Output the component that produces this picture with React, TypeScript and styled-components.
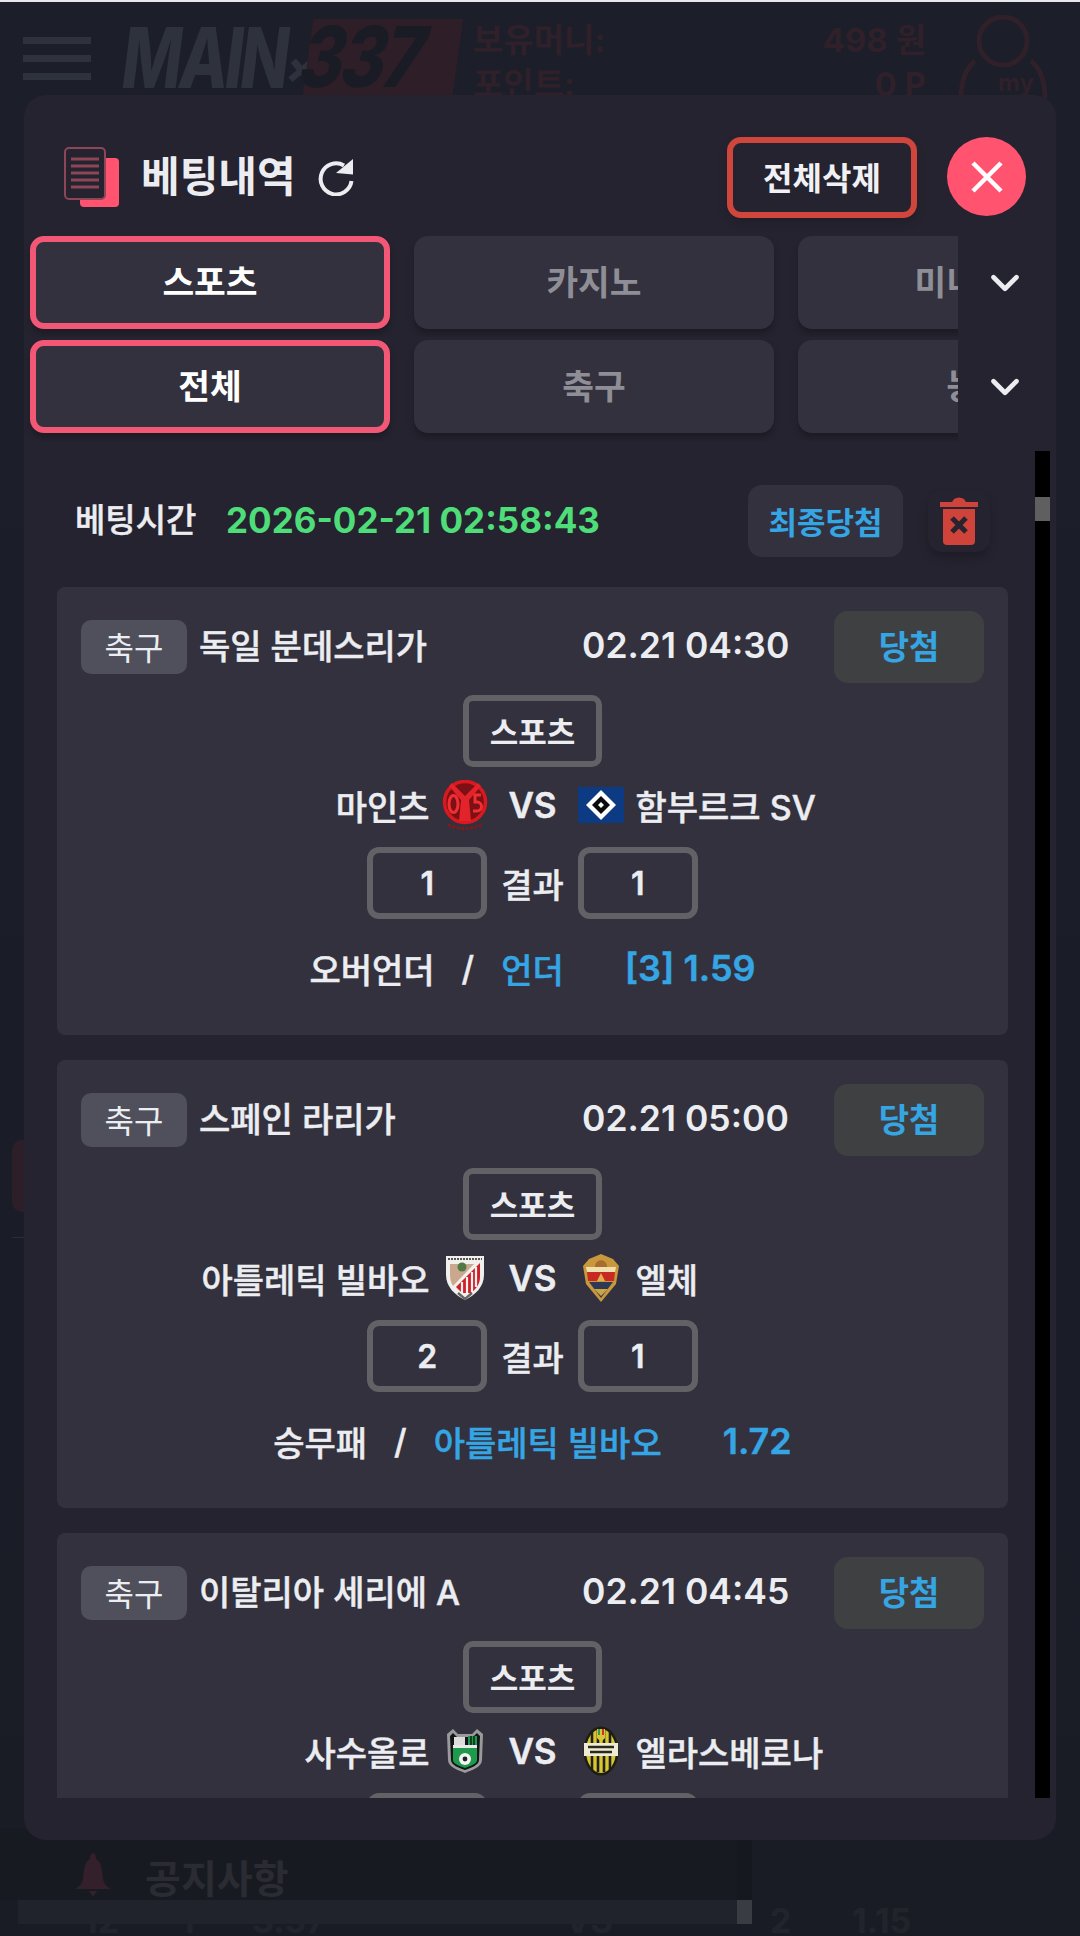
import React from "react";
import styled, { createGlobalStyle, css } from "styled-components";
import { FiChevronDown } from "react-icons/fi";

const GlobalStyle = createGlobalStyle`
    * { box-sizing: border-box; }
    html, body { margin: 0; padding: 0; }
    body {
        width: 1080px;
        height: 1936px;
        overflow: hidden;
        background: #191b25;
        font-family: Inter, "Noto Sans CJK KR", "Noto Sans", sans-serif;
        color: #ecedf1;
    }
`;

/* the korean font has no medium cut, thicken the regular a little */
const medium = css`
    font-weight: 500;
    -webkit-text-stroke: 0.45px currentColor;
`;

/* team crests */
const Mainz = () => (
    <svg width="46" height="50" viewBox="0 0 46 50">
        <circle cx="23" cy="22" r="20.5" fill="#7d1014" stroke="#d9191f" strokeWidth="3.5" />
        <path d="M10 3 L23 16 L36 3 L39 6 L27 20 L29 41 H17 L19 20 L7 6Z" fill="#e3232a" />
        <ellipse cx="11.5" cy="24" rx="4.5" ry="8.5" fill="none" stroke="#ee3035" strokeWidth="3" />
        <path d="M39 15h-6v7h2a4.2 4.2 0 0 1 0 9h-4" fill="none" stroke="#ee3035" strokeWidth="3" />
        <path d="M6 45 Q23 52 40 45" fill="none" stroke="#8c1518" strokeWidth="2.5" strokeDasharray="3 1.5" />
    </svg>
);

const Hamburg = () => (
    <svg width="46" height="36" viewBox="0 0 46 36">
        <rect width="46" height="36" fill="#0c3b84" />
        <path d="M23 3 L38 18 L23 33 L8 18Z" fill="#fff" />
        <path d="M23 9 L32 18 L23 27 L14 18Z" fill="#0b0b0b" />
        <path d="M23 15 L26 18 L23 21 L20 18Z" fill="#fff" />
    </svg>
);

const Athletic = () => (
    <svg width="40" height="46" viewBox="0 0 40 46">
        <path d="M1 1h38v19c0 12-9 20-19 25C10 40 1 32 1 20Z" fill="#f1f0ec" />
        <path d="M3 4h34" stroke="#555" strokeWidth="2" strokeDasharray="2 1" />
        <path d="M5 9h24L8 31C6 28 5 24 5 20Z" fill="#c9a88e" />
        <circle cx="17" cy="12" r="4.5" fill="#4f7a45" />
        <path d="M35 8v14c0 7-4 12-9 16l-9 0-6-6Z" fill="#cf2027" />
        <path d="M17 27v12M22 22v17M27 17v20M31 12v20" stroke="#f4f2ee" strokeWidth="2.2" />
        <path d="M13 38l7 6 7-6" fill="none" stroke="#666" strokeWidth="2.4" />
    </svg>
);

const Elche = () => (
    <svg width="36" height="48" viewBox="0 0 36 48">
        <path d="M18 0 L30 5 L36 12 L33 30 L18 48 L3 30 L0 12 L6 5Z" fill="#c9983c" />
        <path d="M3 13 L33 13 L32 18 L4 18Z" fill="#efe0b0" />
        <path d="M4 18h28l-1 9H5Z" fill="#c62a22" />
        <path d="M6 28h24L18 44Z" fill="#2e3a55" />
        <path d="M12 13c0-9 12-9 12 0Z" fill="#a86c2c" />
        <path d="M14 27l4-8 4 8Z" fill="#e0b050" />
        <path d="M11 35h14l-7 7Z" fill="#c9a544" />
    </svg>
);

const Sassuolo = () => (
    <svg width="40" height="46" viewBox="0 0 40 46">
        <path d="M2 6l6-5 5 5h14l5-5 6 5-1 26c0 7-10 10-17 13C13 42 3 39 3 32Z" fill="#9a9a9a" />
        <path d="M5 8l3-3 4 4h16l4-4 3 3-1 24c0 5-8 8-14 10C14 40 6 37 6 32Z" fill="#12161a" />
        <path d="M8 19h24v13c0 4-7 6-12 8-5-2-12-4-12-8Z" fill="#1d9a4b" />
        <path d="M23 8h9v10h-9Z" fill="#1d9a4b" />
        <path d="M9 9h11v9H9Z" fill="#ddd" />
        <path d="M26 8v10M29 8v10" stroke="#0e1a12" strokeWidth="1.4" />
        <rect x="8" y="17" width="24" height="3" fill="#e8e8e8" />
        <circle cx="20" cy="31" r="6" fill="#f4f4f4" />
        <circle cx="20" cy="31" r="2.4" fill="#222" />
    </svg>
);

const Verona = () => (
    <svg width="36" height="50" viewBox="0 0 36 50">
        <ellipse cx="18" cy="25" rx="17.5" ry="24.5" fill="#1c1e14" />
        <ellipse cx="18" cy="25" rx="15" ry="22" fill="#d8c532" />
        <path d="M9 6v38M15 4v42M21 4v42M27 6v38" stroke="#1f2014" strokeWidth="2.6" />
        <rect x="1" y="17" width="34" height="13" fill="#efecd6" />
        <path d="M5 21h26M7 26h22" stroke="#2a2a1c" strokeWidth="2.6" />
        <path d="M14 3h8v9l-4 4-4-4Z" fill="#d9c53a" />
        <path d="M15 3h2v6h-2z" fill="#3a9a4a" />
        <path d="M19 3h2v6h-2z" fill="#c9352c" />
    </svg>
);

type Game = {
    league: string;
    time: string;
    home: string;
    away: string;
    homeLogo: React.ReactNode;
    awayLogo: React.ReactNode;
    homeScore: number;
    awayScore: number;
    market: string;
    pick: string;
    odds: string;
};

const games: Game[] = [
    {
        league: "독일 분데스리가",
        time: "02.21 04:30",
        home: "마인츠",
        away: "함부르크 SV",
        homeLogo: <Mainz />,
        awayLogo: <Hamburg />,
        homeScore: 1,
        awayScore: 1,
        market: "오버언더",
        pick: "언더",
        odds: "[3] 1.59",
    },
    {
        league: "스페인 라리가",
        time: "02.21 05:00",
        home: "아틀레틱 빌바오",
        away: "엘체",
        homeLogo: <Athletic />,
        awayLogo: <Elche />,
        homeScore: 2,
        awayScore: 1,
        market: "승무패",
        pick: "아틀레틱 빌바오",
        odds: "1.72",
    },
    {
        league: "이탈리아 세리에 A",
        time: "02.21 04:45",
        home: "사수올로",
        away: "엘라스베로나",
        homeLogo: <Sassuolo />,
        awayLogo: <Verona />,
        homeScore: 0,
        awayScore: 0,
        market: "승무패",
        pick: "엘라스베로나",
        odds: "1.85",
    },
];

export default function App() {
    return (
        <Page>
            <GlobalStyle />
            <StatusStrip />
            <BackHeader>
                <Burger>
                    <i />
                    <i />
                    <i />
                </Burger>
                <BackLogo>
                    <LogoMain>MAIN</LogoMain>
                    <LogoCross>×</LogoCross>
                    <LogoBox>
                        <span>337</span>
                    </LogoBox>
                </BackLogo>
                <Wallet>
                    <div>
                        <span>보유머니:</span>
                        <span>498 원</span>
                    </div>
                    <div>
                        <span>포인트:</span>
                        <span>0 P</span>
                    </div>
                </Wallet>
                <MyBox>
                    <svg width="92" height="84" viewBox="0 0 92 84">
                        <circle cx="45" cy="26" r="24" fill="none" stroke="#2f2029" strokeWidth="5" />
                        <path d="M3 84c0-18 4-30 14-38M87 84c0-18-4-30-14-38" fill="none" stroke="#2f2029" strokeWidth="5" />
                    </svg>
                    <span>my</span>
                </MyBox>
            </BackHeader>
            <BackBody>
                <SideTab />
                <SideRule />
            </BackBody>
            <NoticeBar>
                <svg width="38" height="46" viewBox="0 0 38 46">
                    <path d="M19 0c2 0 3 3 3 6 6 3 6 12 7 20 1 5 4 8 8 10H1c4-2 7-5 8-10 1-8 1-17 7-20 0-3 1-6 3-6Z" fill="#33202a" />
                    <path d="M15 38h8l-4 6Z" fill="#33202a" />
                </svg>
                <span>공지사항</span>
            </NoticeBar>
            <BackTable>
                <BackScrollBar>
                    <div />
                    <span />
                </BackScrollBar>
                <b>12</b>
                <b>1</b>
                <b>3.57</b>
                <b>VS</b>
                <b>2</b>
                <b>1.15</b>
            </BackTable>

            <Modal>
                <ModalHeader>
                    <TitleBox>
                        <svg width="55" height="60" viewBox="0 0 55 60">
                            <rect x="16" y="11" width="39" height="49" rx="4" fill="#ff5370" />
                            <rect x="1" y="1" width="40" height="51" rx="4" fill="#24232f" stroke="#8c4656" strokeWidth="2" />
                            <path d="M7 12h28M7 19h28M7 26h28M7 33h28M7 40h28" stroke="#8c4656" strokeWidth="3" />
                        </svg>
                        <h1>베팅내역</h1>
                        <svg width="37" height="37" viewBox="0 0 37 37">
                            <path d="M27 6.5A15.5 15.5 0 1 0 34.500 22" fill="none" stroke="#ecedf1" strokeWidth="4" />
                            <path d="M36 0v15.500L19 14Z" fill="#ecedf1" />
                        </svg>
                    </TitleBox>
                    <DeleteAll>전체삭제</DeleteAll>
                    <CloseButton aria-label="close">
                        <svg width="34" height="34" viewBox="0 0 34 34">
                            <path d="M3 3l28 28M31 3L3 31" stroke="#fff" strokeWidth="4.5" />
                        </svg>
                    </CloseButton>
                </ModalHeader>

                <TabRow>
                    <TabScroller>
                        <Tab $active>스포츠</Tab>
                        <Tab>카지노</Tab>
                        <Tab>미니게임</Tab>
                    </TabScroller>
                    <FiChevronDown size={46} strokeWidth={2.4} />
                </TabRow>
                <TabRow>
                    <TabScroller>
                        <Tab $active>전체</Tab>
                        <Tab>축구</Tab>
                        <Tab>농구</Tab>
                    </TabScroller>
                    <FiChevronDown size={46} strokeWidth={2.4} />
                </TabRow>

                <ListArea>
                    <List>
                        <BetTimeRow>
                            <TimeLabel>베팅시간</TimeLabel>
                            <TimeValue>2026-02-21 02:58:43</TimeValue>
                            <FinalStatus>최종당첨</FinalStatus>
                            <TrashButton aria-label="delete">
                                <svg width="38" height="48" viewBox="0 0 38 48">
                                    <path d="M0 5h12l2-3q5-3 10 0l2 3h12v5H0Z" fill="#d0433a" />
                                    <path d="M3 12h32v32q0 4-4 4H7q-4 0-4-4Z" fill="#d0433a" />
                                    <path d="M12 21l14 14M26 21L12 35" stroke="#26252f" strokeWidth="5" />
                                </svg>
                            </TrashButton>
                        </BetTimeRow>
                        {games.map((g) => (
                            <Card key={g.league}>
                                <CardTop>
                                    <SportTag>축구</SportTag>
                                    <League>{g.league}</League>
                                    <GameTime>{g.time}</GameTime>
                                    <WinBadge>당첨</WinBadge>
                                </CardTop>
                                <KindChip>스포츠</KindChip>
                                <TeamsRow>
                                    <Team $home>
                                        <span>{g.home}</span>
                                        <LogoSlot>{g.homeLogo}</LogoSlot>
                                    </Team>
                                    <Versus>VS</Versus>
                                    <Team>
                                        <LogoSlot>{g.awayLogo}</LogoSlot>
                                        <span>{g.away}</span>
                                    </Team>
                                </TeamsRow>
                                <ScoreRow>
                                    <ScoreBox>{g.homeScore}</ScoreBox>
                                    <span>결과</span>
                                    <ScoreBox>{g.awayScore}</ScoreBox>
                                </ScoreRow>
                                <BetRow>
                                    <span>{g.market}</span>
                                    <span>/</span>
                                    <Blue>{g.pick}</Blue>
                                    <Odds>{g.odds}</Odds>
                                </BetRow>
                            </Card>
                        ))}
                    </List>
                    <ScrollTrack>
                        <div />
                    </ScrollTrack>
                </ListArea>
            </Modal>
        </Page>
    );
}

const Page = styled.div`
    position: relative;
    width: 1080px;
    height: 1936px;
    overflow: hidden;
    display: flex;
    flex-direction: column;
    background: linear-gradient(#1c1e2a, #191c25);
`;

const StatusStrip = styled.div`
    height: 2px;
    background: #e9e9ec;
`;

const BackHeader = styled.div`
    height: 118px;
    display: flex;
    align-items: flex-start;
    padding: 13px 0 0 23px;
`;

const Burger = styled.div`
    width: 68px;
    margin-top: 22px;
    display: flex;
    flex-direction: column;
    gap: 11px;

    i {
        display: block;
        height: 7px;
        background: #2e323c;
    }
`;

const BackLogo = styled.div`
    width: 381px;
    height: 80px;
    padding-left: 31px;
    display: flex;
    align-items: flex-start;
    font-weight: 800;
    font-style: italic;
    color: #2e323c;
    white-space: nowrap;
`;

const LogoMain = styled.div`
    width: 166px;
    margin-top: 3px;
    font-size: 84px;
    line-height: 80px;
    letter-spacing: -4px;
    transform: scaleX(0.76);
    transform-origin: left center;
`;

const LogoCross = styled.div`
    width: 20px;
    margin: 30px 0 0 -2px;
    font-size: 44px;
    line-height: 44px;
`;

const LogoBox = styled.div`
    width: 150px;
    height: 76px;
    margin: 4px 0 0 2px;
    background: #2d1e28;
    color: #191b25;
    font-size: 84px;
    line-height: 76px;
    letter-spacing: -3px;
    transform: skewX(-8deg);

    span {
        display: block;
        transform: scaleX(0.8) translateX(-8px);
        transform-origin: left center;
    }
`;

const Wallet = styled.div`
    width: 453px;
    margin-left: 1px;
    padding-top: 3px;
    font-size: 33px;
    font-weight: 700;
    color: #2f2029;

    div {
        display: flex;
        justify-content: space-between;
        height: 44px;
        line-height: 44px;
        white-space: nowrap;
    }
`;

const MyBox = styled.div`
    position: relative;
    width: 92px;
    margin-left: 32px;
    color: #2f2029;

    span {
        position: absolute;
        left: 40px;
        top: 53px;
        font-size: 24px;
        font-weight: 700;
    }
`;

const BackBody = styled.div`
    flex: 1;
`;

const SideTab = styled.div`
    width: 24px;
    height: 72px;
    margin: 1020px 0 0 12px;
    border-radius: 10px 0 0 10px;
    background: #2d1f2a;
`;

const SideRule = styled.div`
    width: 24px;
    height: 1px;
    margin: 25px 0 0 12px;
    background: #2a2c36;
`;

const NoticeBar = styled.div`
    width: 752px;
    height: 72px;
    display: flex;
    align-items: center;
    gap: 33px;
    padding: 24px 0 0 74px;
    font-size: 39px;
    font-weight: 700;
    color: #2a2b33;
    background: #181a22;
    border-right: 15px solid #16181f;
`;

const BackTable = styled.div`
    position: relative;
    height: 36px;
    padding-top: 2px;
    display: grid;
    grid-template-columns: 97px 72px 313px 205px 82px 1fr;
    padding-left: 83px;
    color: #22242c;
    font-size: 34px;
    line-height: 38px;

    b {
        font-weight: 700;
    }
`;

const BackScrollBar = styled.div`
    position: absolute;
    left: 18px;
    top: 0;
    height: 24px;
    display: flex;

    div {
        width: 719px;
        background: #20232b;
    }

    span {
        width: 15px;
        background: #3a3c44;
    }
`;

const Modal = styled.div`
    position: absolute;
    left: 24px;
    top: 95px;
    width: 1032px;
    height: 1745px;
    display: flex;
    flex-direction: column;
    background: #24232f;
    border-radius: 22px;
`;

const ModalHeader = styled.div`
    height: 141px;
    display: flex;
    align-items: flex-start;
    padding: 42px 30px 0 40px;
`;

const TitleBox = styled.div`
    flex: 1;
    display: flex;
    align-items: center;
    height: 80px;
    color: #ecedf1;

    h1 {
        margin: 0 21px 0 22px;
        font-size: 42px;
        line-height: 1;
        font-weight: 700;
    }
`;

const DeleteAll = styled.button`
    width: 190px;
    height: 81px;
    padding: 0 0 3px;
    border: 6px solid #d0463c;
    border-radius: 14px;
    background: #24232f;
    color: #f1f1f4;
    font: 700 32px Inter, "Noto Sans CJK KR", sans-serif;
    box-shadow: 0 5px 10px rgba(0, 0, 0, 0.15);
`;

const CloseButton = styled.button`
    width: 79px;
    height: 79px;
    margin-left: 30px;
    border: 0;
    padding: 0;
    border-radius: 50%;
    background: #ff5370;
    display: flex;
    align-items: center;
    justify-content: center;
`;

const TabRow = styled.div`
    height: 93px;
    margin-bottom: 11px;
    display: flex;
    align-items: center;
    color: #ecedf1;

    svg {
        margin-left: 24px;
    }
`;

const TabScroller = styled.div`
    width: 934px;
    height: calc(100% + 8px);
    margin-bottom: -8px;
    padding-left: 6px;
    display: flex;
    gap: 24px;
    overflow: hidden;
`;

const Tab = styled.div<{ $active?: boolean }>`
    flex: 0 0 360px;
    height: 93px;
    padding-bottom: 5px;
    display: flex;
    align-items: center;
    justify-content: center;
    white-space: nowrap;
    border-radius: 14px;
    font-size: 34.5px;
    font-weight: 700;
    background: #32313d;
    color: ${({ $active }) => ($active ? "#ffffff" : "#8f8e96")};
    border: ${({ $active }) => ($active ? "6px solid #f25876" : "0")};
    box-shadow: 0 5px 6px rgba(0, 0, 0, 0.22);
`;

const ListArea = styled.div`
    height: 1347px;
    margin-top: 7px;
    display: flex;
    padding-left: 33px;
`;

const List = styled.div`
    width: 951px;
    overflow: hidden;
    display: flex;
    flex-direction: column;
`;

const BetTimeRow = styled.div`
    height: 136px;
    flex-shrink: 0;
    display: flex;
    align-items: flex-start;
    padding: 34px 0 0 18px;
`;

const TimeLabel = styled.span`
    width: 151px;
    height: 72px;
    line-height: 70px;
    font-size: 33px;
    ${medium}
`;

const TimeValue = styled.span`
    width: 522px;
    height: 72px;
    line-height: 70px;
    font-size: 35px;
    font-weight: 700;
    color: #4edd78;
`;

const FinalStatus = styled.div`
    width: 155px;
    height: 72px;
    padding-bottom: 2px;
    display: flex;
    align-items: center;
    justify-content: center;
    border-radius: 14px;
    background: #32313d;
    color: #35a5e4;
    font-size: 31px;
    font-weight: 700;
`;

const TrashButton = styled.button`
    width: 62px;
    height: 62px;
    margin: 5px 0 0 25px;
    padding: 0;
    border: 0;
    border-radius: 14px;
    background: #24232f;
    display: flex;
    align-items: center;
    justify-content: center;
    box-shadow: 0 6px 10px rgba(0, 0, 0, 0.2);
`;

const Card = styled.div`
    flex: 0 0 448px;
    margin-bottom: 25px;
    padding: 24px 24px 0;
    background: #32313d;
    border-radius: 8px;
    display: flex;
    flex-direction: column;
    align-items: center;
`;

const CardTop = styled.div`
    width: 100%;
    height: 72px;
    display: flex;
    align-items: center;
`;

const SportTag = styled.div`
    width: 106px;
    height: 54px;
    padding-bottom: 3px;
    display: flex;
    align-items: center;
    justify-content: center;
    border-radius: 10px;
    background: #50505c;
    font-size: 32px;
    margin-right: 12px;
`;

const League = styled.div`
    width: 383px;
    padding-bottom: 5px;
    font-size: 34px;
    white-space: nowrap;
    ${medium}
`;

const GameTime = styled.div`
    width: 252px;
    padding-bottom: 4px;
    font-size: 35.5px;
    font-weight: 600;
    white-space: nowrap;
`;

const WinBadge = styled.div`
    width: 150px;
    height: 72px;
    padding-bottom: 4px;
    display: flex;
    align-items: center;
    justify-content: center;
    border-radius: 14px;
    background: #3f4042;
    color: #35a5e4;
    font-size: 33px;
    font-weight: 700;
`;

const KindChip = styled.div`
    width: 139px;
    height: 72px;
    margin-top: 12px;
    padding-bottom: 2px;
    display: flex;
    align-items: center;
    justify-content: center;
    border: 6px solid #626266;
    border-radius: 10px;
    font-size: 31px;
    font-weight: 700;
`;

const TeamsRow = styled.div`
    width: 100%;
    height: 76px;
    display: grid;
    grid-template-columns: 1fr 90px 1fr;
    align-items: center;
    font-size: 34px;
    ${medium}
`;

const Team = styled.div<{ $home?: boolean }>`
    display: flex;
    align-items: center;
    gap: 12px;
    white-space: nowrap;
    justify-content: ${({ $home }) => ($home ? "flex-end" : "flex-start")};
`;

const LogoSlot = styled.div`
    flex: 0 0 46px;
    display: flex;
    justify-content: center;
    -webkit-text-stroke: 0;
`;

const Versus = styled.div`
    text-align: center;
    font-size: 35px;
    font-weight: 600;
`;

const ScoreRow = styled.div`
    height: 72px;
    margin-top: 4px;
    display: flex;
    align-items: center;
    gap: 14px;
    font-size: 34px;
    ${medium}
`;

const ScoreBox = styled.div`
    width: 120px;
    height: 72px;
    display: flex;
    align-items: center;
    justify-content: center;
    border: 6px solid #626266;
    border-radius: 12px;
    font-size: 32px;
    font-weight: 600;
`;

const BetRow = styled.div`
    height: 60px;
    margin-top: 19px;
    display: flex;
    align-items: center;
    gap: 27px;
    font-size: 34px;
    white-space: nowrap;
    ${medium}
`;

const Blue = styled.span`
    color: #35a5e4;
`;

const Odds = styled(Blue)`
    margin-left: 34px;
    font-size: 36px;
    font-weight: 600;
`;

const ScrollTrack = styled.div`
    width: 15px;
    margin-left: 27px;
    background: #000;

    div {
        width: 15px;
        height: 24px;
        margin-top: 46px;
        background: #5f5f5f;
    }
`;
